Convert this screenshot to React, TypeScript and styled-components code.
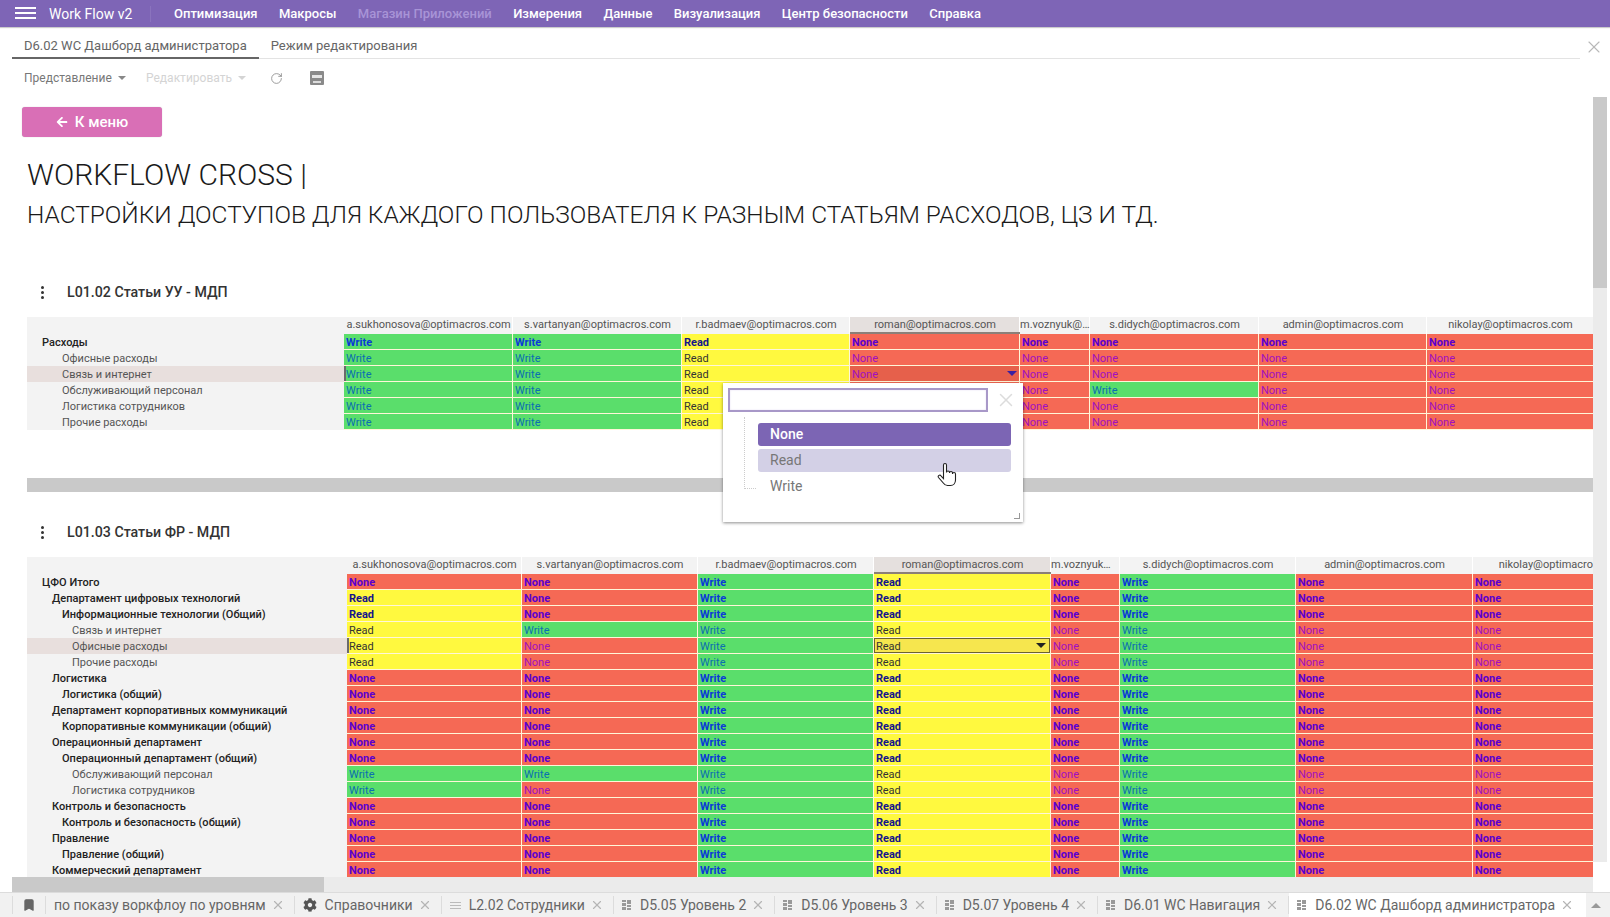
import React from 'react';
import styled, { createGlobalStyle } from 'styled-components';
import { FaArrowLeft, FaCog } from 'react-icons/fa';
import { Bookmark, RotateCw, X } from 'lucide-react';

const GlobalStyle = createGlobalStyle`
  html, body {
    margin: 0;
    padding: 0;
    background: #fff;
    font-family: Roboto, "Liberation Sans", sans-serif;
    overflow: hidden;
  }
`;

const Shell = styled.div`
  position: relative;
  display: flex;
  flex-direction: column;
  width: 1610px;
  height: 917px;
  overflow: hidden;
`;

// top bar
const TopBar = styled.header`
  display: flex;
  align-items: center;
  flex: none;
  height: 27px;
  padding-left: 15px;
  background: #7e65b6;
  box-shadow: 0 1px 1px rgb(0 0 0 / 20%);
  color: #fff;
`;

const Burger = styled.div`
  display: flex;
  flex-direction: column;
  justify-content: space-between;
  width: 21px;
  height: 12px;
  margin-bottom: 2px;
  span {
    height: 2px;
    background: #fff;
  }
`;

const Brand = styled.div`
  margin-left: 13px;
  width: 101px;
  font-size: 14px;
  border-right: 1px solid #8a73bd;
`;

const NavList = styled.nav`
  display: flex;
  gap: 21.4px;
  margin-left: 23px;
`;

const NavItem = styled.span<{ $off?: boolean }>`
  font-size: 13px;
  font-weight: 500;
  white-space: nowrap;
  color: ${(p) => (p.$off ? '#a894d6' : '#fff')};
`;

// report tabs
const TabRow = styled.div`
  display: flex;
  align-items: flex-end;
  flex: none;
  height: 32px;
  padding-left: 12px;
  position: relative;
`;

const TabLine = styled.div`
  display: flex;
  width: 1568px;
  border-bottom: 1px solid #e3e3e3;
`;

const ReportTab = styled.div<{ $active?: boolean }>`
  padding: 0 12px 4px;
  font-size: 13px;
  color: #666;
  margin-bottom: -1px;
  border-bottom: 2px solid ${(p) => (p.$active ? '#666' : 'transparent')};
`;

const CloseBtn = styled.div`
  margin-left: 4px;
  margin-bottom: 2px;
  color: #b8b8b8;
  display: flex;
`;

// toolbar
const Toolbar = styled.div`
  display: flex;
  align-items: center;
  flex: none;
  height: 38px;
  padding-left: 24px;
`;

const ToolMenu = styled.div<{ $off?: boolean }>`
  display: flex;
  align-items: center;
  gap: 6px;
  width: 122px;
  font-size: 12px;
  color: ${(p) => (p.$off ? '#d4d4d4' : '#777')};
  &::after {
    content: '';
    border: 4px solid transparent;
    border-top-color: ${(p) => (p.$off ? '#d4d4d4' : '#888')};
    border-bottom-width: 0;
  }
`;

const ToolIcon = styled.div<{ $gap: number }>`
  display: flex;
  margin-left: ${(p) => p.$gap}px;
  color: #888;
`;

// main area
const Workspace = styled.div`
  display: flex;
  flex: 1;
  min-height: 0;
`;

const Content = styled.main`
  flex: 1;
  min-width: 0;
  padding: 10px 0 0 22px;
  overflow: hidden;
`;

const MenuButton = styled.div`
  display: flex;
  align-items: center;
  justify-content: center;
  gap: 7px;
  width: 140px;
  height: 30px;
  border-radius: 3px;
  background: #d96fb6;
  color: #fff;
  font-size: 15px;
  font-weight: 500;
  box-shadow: 0 0 1px rgb(0 0 0 / 30%);
`;

const Heading = styled.h1`
  margin: 20px 0 0 5px;
  font-size: 30px;
  line-height: 36px;
  font-weight: 300;
  color: #1a1a1a;
`;

const SubHeading = styled.h2`
  margin: 7px 0 0 5px;
  font-size: 24.45px;
  line-height: 30px;
  font-weight: 300;
  color: #1a1a1a;
  white-space: nowrap;
`;

const Section = styled.section<{ $top: number }>`
  margin: ${(p) => p.$top}px 0 0 5px;
`;

const SectionHead = styled.div`
  display: flex;
  align-items: center;
  height: 24px;
  margin-bottom: 13px;
  padding-left: 14px;
  font-size: 14.2px;
  font-weight: 500;
  color: #333;
`;

const Dots = styled.div`
  display: flex;
  flex-direction: column;
  gap: 2px;
  margin-right: 23px;
  span {
    width: 3px;
    height: 3px;
    border-radius: 50%;
    background: #333;
  }
`;

const GridClip = styled.div`
  width: 1567px;
  overflow: hidden;
`;

const Grid = styled.div<{ $cols: string }>`
  display: grid;
  grid-template-columns: ${(p) => p.$cols};
  grid-template-rows: 17px;
  grid-auto-rows: 16px;
  width: max-content;
`;

const Corner = styled.div`
  background: #f3f3f3;
`;

const HeadCell = styled.div<{ $current?: boolean }>`
  box-sizing: border-box;
  text-align: center;
  font-size: 11px;
  line-height: 16px;
  white-space: nowrap;
  overflow: hidden;
  text-overflow: ellipsis;
  color: #555;
  background: ${(p) => (p.$current ? '#e5e0de' : '#f3f3f3')};
  border-bottom: ${(p) => (p.$current ? '2px solid #8b7f78' : '0')};
  box-shadow: inset -1px 0 0 #fff;
`;

const RowLabel = styled.div<{ $level: number; $bold?: boolean; $current?: boolean }>`
  height: 16px;
  padding-left: ${(p) => 15 + p.$level * 10}px;
  font-size: 11px;
  line-height: 17px;
  letter-spacing: ${(p) => (p.$bold ? '0.03px' : '0')};
  white-space: nowrap;
  font-weight: ${(p) => (p.$bold ? 500 : 400)};
  color: ${(p) => (p.$bold ? '#222' : '#555')};
  background: ${(p) => (p.$current ? '#e8dfdd' : '#f3f3f3')};
`;

const tones = {
  None: { bg: '#f56955', fg: '#a010c0', strong: '#5a00d0' },
  Read: { bg: '#fff93f', fg: '#333', strong: '#14148c' },
  Write: { bg: '#5ade6b', fg: '#0a70b0', strong: '#0a3ad8' },
};

type Access = keyof typeof tones;

const Cell = styled.div<{ $v: Access; $bold?: boolean; $mark?: boolean }>`
  position: relative;
  box-sizing: border-box;
  height: 16px;
  padding-left: 2px;
  font-size: 11px;
  line-height: 17px;
  white-space: nowrap;
  font-weight: ${(p) => (p.$bold ? 700 : 400)};
  background: ${(p) => tones[p.$v].bg};
  color: ${(p) => (p.$bold ? tones[p.$v].strong : tones[p.$v].fg)};
  border-right: 1px solid #fff6d8;
  border-bottom: 1px solid #fff6d8;
  ${(p) => p.$mark && 'box-shadow: inset 2px 0 0 #6b6b6b;'}
`;

const ActiveRed = styled(Cell)`
  background: #e6604b;
  &::after {
    content: '';
    position: absolute;
    right: 2px;
    top: 5px;
    border: 5px solid transparent;
    border-top-color: #3a1fa0;
    border-bottom-width: 0;
  }
`;

const ActiveYellow = styled(Cell)`
  background: #f6e64e;
  box-shadow: inset 0 0 0 1px #6b6230;
  &::after {
    content: '';
    position: absolute;
    right: 4px;
    top: 5px;
    border: 5px solid transparent;
    border-top-color: #222;
    border-bottom-width: 0;
  }
`;

const TableBar = styled.div`
  width: 1567px;
  height: 14px;
  margin-top: 48px;
  background: #c9c9c9;
`;

const VTrack = styled.div`
  flex: none;
  width: 14px;
  margin: 0 3px 15px 0;
  background: #ebebeb;
`;

const VThumb = styled.div`
  height: 191px;
  background: #c9c9c9;
`;

const HTrack = styled.div`
  flex: none;
  height: 15px;
  width: 1581px;
  margin-left: 12px;
  background: #ebebeb;
`;

const HThumb = styled.div`
  width: 312px;
  height: 100%;
  background: #c9c9c9;
`;

// bottom tabs
const BottomBar = styled.footer`
  display: flex;
  align-items: stretch;
  flex: none;
  height: 25px;
  background: #f1f1f1;
  border-top: 1px solid #dcdcdc;
  box-sizing: border-box;
`;

const BookmarkCell = styled.div`
  display: flex;
  align-items: center;
  justify-content: center;
  box-sizing: border-box;
  width: 34px;
  margin: 0 0 0 12px;
  color: #666;
  position: relative;
  &::before,
  &::after {
    content: '';
    position: absolute;
    top: 3px;
    bottom: 3px;
    width: 1px;
    background: #dcdcdc;
  }
  &::before {
    left: 0;
  }
  &::after {
    right: 0;
  }
`;

const Sheet = styled.div<{ $active?: boolean }>`
  display: flex;
  align-items: center;
  gap: 8px;
  box-sizing: border-box;
  height: 100%;
  padding: 0 ${(p) => (p.$active ? 12 : 10)}px 0 8px;
  font-size: 14px;
  white-space: nowrap;
  color: #666;
  background: ${(p) => (p.$active ? '#fff' : 'transparent')};
  position: relative;
  &::after {
    content: ${(p) => (p.$active ? 'none' : "''")};
    position: absolute;
    right: 0;
    top: 3px;
    bottom: 3px;
    width: 1px;
    background: #dcdcdc;
  }
`;

const SheetLabel = styled.span`
  margin-right: -3px;
`;

const SheetClose = styled.span`
  display: flex;
  color: #b5b5b5;
`;

const ScrollUp = styled.div`
  margin: 10px 0 0 5px;
  border: 5px solid transparent;
  border-bottom-color: #999;
  border-top-width: 0;
  height: 0;
`;

// dropdown
const Popup = styled.div`
  position: absolute;
  left: 723px;
  top: 383px;
  box-sizing: border-box;
  width: 300px;
  height: 139px;
  background: #fff;
  box-shadow: 0 1px 3px rgb(0 0 0 / 45%);
`;

const PopupHead = styled.div`
  display: flex;
  align-items: center;
  padding: 5px 0 0 5px;
`;

const SearchBox = styled.div`
  box-sizing: border-box;
  width: 260px;
  height: 24px;
  border: 2px solid #a898c8;
  box-shadow: inset 0 0 2px #e4dcf2;
`;

const PopupClose = styled.div`
  display: flex;
  margin-left: 7px;
  color: #dcdcdc;
`;

const OptionTree = styled.div`
  position: relative;
  margin: 11px 0 0 35px;
  display: flex;
  flex-direction: column;
  gap: 3px;
  &::before {
    content: '';
    position: absolute;
    left: -14px;
    top: -6px;
    height: 71px;
    width: 11px;
    border-left: 1px dotted #ccc;
    border-bottom: 1px dotted #ccc;
  }
`;

const Option = styled.div<{ $state?: 'on' | 'hover' }>`
  width: 253px;
  height: 23px;
  box-sizing: border-box;
  padding-left: 12px;
  border-radius: 3px;
  font-size: 14px;
  line-height: 23px;
  font-weight: ${(p) => (p.$state === 'on' ? 500 : 400)};
  color: ${(p) => (p.$state === 'on' ? '#fff' : '#777')};
  background: ${(p) =>
    p.$state === 'on' ? '#7c65b4' : p.$state === 'hover' ? '#d3d0e6' : 'transparent'};
`;

const Grip = styled.div`
  position: absolute;
  right: 3px;
  bottom: 3px;
  width: 5px;
  height: 5px;
  border-right: 1px solid #999;
  border-bottom: 1px solid #999;
`;

const HandCursor = styled.svg`
  position: absolute;
  left: 214px;
  top: 79px;
`;

const users = [
  'a.sukhonosova@optimacros.com',
  's.vartanyan@optimacros.com',
  'r.badmaev@optimacros.com',
  'roman@optimacros.com',
  'm.voznyuk@optimacros.com',
  's.didych@optimacros.com',
  'admin@optimacros.com',
  'nikolay@optimacros.com',
];

const N: Access = 'None';
const R: Access = 'Read';
const W: Access = 'Write';

type Row = { name: string; level: number; bold?: boolean; values: Access[] };

const topRows: Row[] = [
  { name: 'Расходы', level: 0, bold: true, values: [W, W, R, N, N, N, N, N] },
  { name: 'Офисные расходы', level: 2, values: [W, W, R, N, N, N, N, N] },
  { name: 'Связь и интернет', level: 2, values: [W, W, R, N, N, N, N, N] },
  { name: 'Обслуживающий персонал', level: 2, values: [W, W, R, N, N, W, N, N] },
  { name: 'Логистика сотрудников', level: 2, values: [W, W, R, N, N, N, N, N] },
  { name: 'Прочие расходы', level: 2, values: [W, W, R, N, N, N, N, N] },
];

const plain: Access[] = [N, N, W, R, N, W, N, N];

const bottomRows: Row[] = [
  { name: 'ЦФО Итого', level: 0, bold: true, values: plain },
  { name: 'Департамент цифровых технологий', level: 1, bold: true, values: [R, N, W, R, N, W, N, N] },
  { name: 'Информационные технологии (Общий)', level: 2, bold: true, values: [R, N, W, R, N, W, N, N] },
  { name: 'Связь и интернет', level: 3, values: [R, W, W, R, N, W, N, N] },
  { name: 'Офисные расходы', level: 3, values: [R, N, W, R, N, W, N, N] },
  { name: 'Прочие расходы', level: 3, values: [R, N, W, R, N, W, N, N] },
  { name: 'Логистика', level: 1, bold: true, values: plain },
  { name: 'Логистика (общий)', level: 2, bold: true, values: plain },
  { name: 'Департамент корпоративных коммуникаций', level: 1, bold: true, values: plain },
  { name: 'Корпоративные коммуникации (общий)', level: 2, bold: true, values: plain },
  { name: 'Операционный департамент', level: 1, bold: true, values: plain },
  { name: 'Операционный департамент (общий)', level: 2, bold: true, values: plain },
  { name: 'Обслуживающий персонал', level: 3, values: [W, W, W, R, N, W, N, N] },
  { name: 'Логистика сотрудников', level: 3, values: [W, N, W, R, N, W, N, N] },
  { name: 'Контроль и безопасность', level: 1, bold: true, values: plain },
  { name: 'Контроль и безопасность (общий)', level: 2, bold: true, values: plain },
  { name: 'Правление', level: 1, bold: true, values: plain },
  { name: 'Правление (общий)', level: 2, bold: true, values: plain },
  { name: 'Коммерческий департамент', level: 1, bold: true, values: plain },
];

const AccessGrid: React.FC<{
  cols: string;
  rows: Row[];
  currentRow: number;
  Active: typeof ActiveRed;
}> = ({ cols, rows, currentRow, Active }) => (
  <GridClip>
    <Grid $cols={cols}>
      <Corner />
      {users.map((u, i) => (
        <HeadCell key={u} $current={i === 3}>
          {u}
        </HeadCell>
      ))}
      {rows.map((row, r) => (
        <React.Fragment key={row.name}>
          <RowLabel $level={row.level} $bold={row.bold} $current={r === currentRow}>
            {row.name}
          </RowLabel>
          {row.values.map((v, c) =>
            r === currentRow && c === 3 ? (
              <Active key={c} $v={v} $bold={row.bold}>
                {v}
              </Active>
            ) : (
              <Cell key={c} $v={v} $bold={row.bold} $mark={r === currentRow && c === 0}>
                {v}
              </Cell>
            ),
          )}
        </React.Fragment>
      ))}
    </Grid>
  </GridClip>
);

const SheetIcon: React.FC = () => (
  <svg width="10" height="12" viewBox="0 0 10 12" fill="#999">
    <rect x="0" y="1" width="4" height="2" />
    <rect x="0" y="4" width="4" height="3" />
    <rect x="0" y="8" width="4" height="3" />
    <rect x="5" y="1" width="4" height="4" />
    <rect x="5" y="6" width="4" height="2" />
    <rect x="5" y="9" width="4" height="2" />
  </svg>
);

const ListIcon: React.FC = () => (
  <svg width="11" height="12" viewBox="0 0 11 12" fill="#bbb">
    <rect y="3" width="11" height="1" />
    <rect y="6" width="11" height="1" />
    <rect y="9" width="11" height="1" />
  </svg>
);

const SaveIcon: React.FC = () => (
  <svg width="14" height="14" viewBox="0 0 14 14">
    <rect width="14" height="14" rx="1" fill="#8a8a8a" />
    <rect x="2" y="4" width="10" height="3" fill="#e6e6e6" />
    <rect x="3" y="10" width="8" height="2" fill="#dcdcdc" />
  </svg>
);

const sheets: { label: string; icon: React.ReactNode }[] = [
  { label: 'по показу воркфлоу по уровням', icon: null },
  { label: 'Справочники', icon: <FaCog size={14} color="#555" /> },
  { label: 'L2.02 Сотрудники', icon: <ListIcon /> },
  { label: 'D5.05 Уровень 2', icon: <SheetIcon /> },
  { label: 'D5.06 Уровень 3', icon: <SheetIcon /> },
  { label: 'D5.07 Уровень 4', icon: <SheetIcon /> },
  { label: 'D6.01 WC Навигация', icon: <SheetIcon /> },
  { label: 'D6.02 WC Дашборд администратора', icon: <SheetIcon /> },
];

const navItems = [
  'Оптимизация',
  'Макросы',
  'Магазин Приложений',
  'Измерения',
  'Данные',
  'Визуализация',
  'Центр безопасности',
  'Справка',
];

const App: React.FC = () => (
  <Shell>
    <GlobalStyle />
    <TopBar>
      <Burger>
        <span />
        <span />
        <span />
      </Burger>
      <Brand>Work Flow v2</Brand>
      <NavList>
        {navItems.map((item) => (
          <NavItem key={item} $off={item === 'Магазин Приложений'}>
            {item}
          </NavItem>
        ))}
      </NavList>
    </TopBar>

    <TabRow>
      <TabLine>
        <ReportTab $active>D6.02 WC Дашборд администратора</ReportTab>
        <ReportTab>Режим редактирования</ReportTab>
      </TabLine>
      <CloseBtn>
        <X size={20} strokeWidth={1.3} />
      </CloseBtn>
    </TabRow>

    <Toolbar>
      <ToolMenu>Представление</ToolMenu>
      <ToolMenu $off>Редактировать</ToolMenu>
      <ToolIcon $gap={2}>
        <RotateCw size={13} strokeWidth={1.5} />
      </ToolIcon>
      <ToolIcon $gap={27}>
        <SaveIcon />
      </ToolIcon>
    </Toolbar>

    <Workspace>
      <Content>
        <MenuButton>
          <FaArrowLeft size={12} />К меню
        </MenuButton>
        <Heading>WORKFLOW CROSS |</Heading>
        <SubHeading>НАСТРОЙКИ ДОСТУПОВ ДЛЯ КАЖДОГО ПОЛЬЗОВАТЕЛЯ К РАЗНЫМ СТАТЬЯМ РАСХОДОВ, ЦЗ И ТД.</SubHeading>

        <Section $top={50}>
          <SectionHead>
            <Dots>
              <span />
              <span />
              <span />
            </Dots>
            L01.02 Статьи УУ - МДП
          </SectionHead>
          <AccessGrid
            cols="317px 169px 169px 168px 170px 70px 169px 168px 167px"
            rows={topRows}
            currentRow={2}
            Active={ActiveRed}
          />
          <TableBar />
        </Section>

        <Section $top={28}>
          <SectionHead>
            <Dots>
              <span />
              <span />
              <span />
            </Dots>
            L01.03 Статьи ФР - МДП
          </SectionHead>
          <AccessGrid
            cols="320px 175px 176px 176px 177px 69px 176px 177px 176px"
            rows={bottomRows}
            currentRow={4}
            Active={ActiveYellow}
          />
        </Section>
      </Content>
      <VTrack>
        <VThumb />
      </VTrack>
    </Workspace>
    <HTrack>
      <HThumb />
    </HTrack>

    <BottomBar>
      <BookmarkCell>
        <Bookmark size={14} fill="currentColor" />
      </BookmarkCell>
      {sheets.map((s, i) => (
        <Sheet key={s.label} $active={i === sheets.length - 1}>
          {s.icon}
          <SheetLabel>{s.label}</SheetLabel>
          <SheetClose>
            <X size={14} />
          </SheetClose>
        </Sheet>
      ))}
      <ScrollUp />
    </BottomBar>

    <Popup>
      <PopupHead>
        <SearchBox />
        <PopupClose>
          <X size={22} strokeWidth={1.6} />
        </PopupClose>
      </PopupHead>
      <OptionTree>
        <Option $state="on">None</Option>
        <Option $state="hover">Read</Option>
        <Option>Write</Option>
      </OptionTree>
      <Grip />
      <HandCursor width="20" height="25" viewBox="0 0 20 25" fill="#fff" stroke="#222" strokeWidth="1.1">
        <path d="M6.5 14V3a1.5 1.5 0 0 1 3 0v7.5a1.5 1.5 0 0 1 3 0V11a1.5 1.5 0 0 1 3 0v1a1.5 1.5 0 0 1 3 0v6c0 3-2 5.5-5 5.5h-3c-2 0-3.2-1-4.2-2.5L1.5 15.5a1.5 1.5 0 0 1 2.5-1.7L6.5 16.5z" />
      </HandCursor>
    </Popup>
  </Shell>
);

export default App;
